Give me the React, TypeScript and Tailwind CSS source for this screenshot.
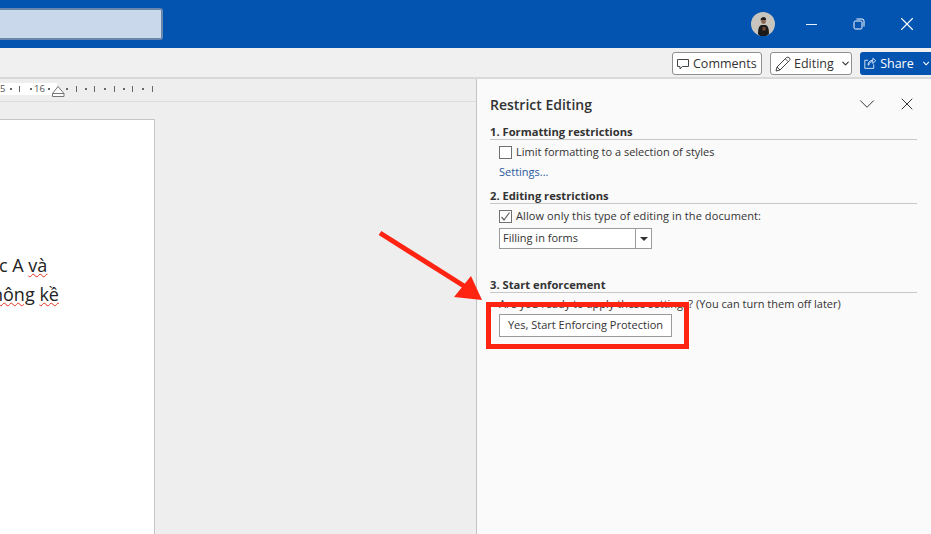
import React from 'react';
import { X, ChevronDown } from 'lucide-react';

const font = "font-['Open_Sans','Noto_Sans',sans-serif]";

const Ruler = () => (
  <div className="h-[23px] bg-[#eeeeee] border-b border-[#dcdcdc] flex items-start pt-[4px] shrink-0">
    <div className="w-[57px] h-[12px] bg-white flex items-center text-[9.5px] leading-none text-[#555555] overflow-hidden shrink-0">
      <span className="w-[6px]">5</span>
      <span className="ml-[4px] w-[2px] h-[2px] bg-[#666666]" />
      <span className="ml-[7px] w-px h-[6px] bg-[#666666]" />
      <span className="ml-[10px] w-[2px] h-[2px] bg-[#666666]" />
      <span className="ml-[2px]">16</span>
      <span className="ml-[3px] w-[2px] h-[2px] bg-[#666666]" />
    </div>
    <svg width="110" height="20" viewBox="0 0 110 20" className="-ml-[6px]">
      <path d="M1.5 10.5 L7 3.5 L13 10.5 V13.5 H1.5 Z M1.5 10.5 H13" fill="#ffffff" stroke="#777777" />
      {[15, 34, 53, 72, 91].map(x => (
        <rect key={x} x={x} y={5} width="2" height="2" fill="#666666" />
      ))}
      {[25, 43, 63, 81, 101].map(x => (
        <rect key={x} x={x} y={3} width="1" height="6" fill="#666666" />
      ))}
    </svg>
  </div>
);

const Section = ({ title, children }: { title: string; children?: React.ReactNode }) => (
  <div>
    <div className="h-[18px] pt-[2px] mr-[14px] border-b border-[#c8c8c8] text-[11.2px] leading-[15px] font-bold text-[#333333] whitespace-nowrap">
      {title}
    </div>
    {children}
  </div>
);

const Check = ({ checked, label }: { checked?: boolean; label: string }) => (
  <div className="flex items-center gap-[4px] ml-[9px] h-[14px] text-[11px] text-[#333333] whitespace-nowrap">
    <div className="w-[13px] h-[13px] border border-[#707070] bg-white flex items-center justify-center">
      {checked && (
        <svg width="11" height="11" viewBox="0 0 11 11">
          <path d="M1.5 6 L4 9 L9.5 1.5" fill="none" stroke="#606060" strokeWidth="1.2" />
        </svg>
      )}
    </div>
    <span className={checked ? 'tracking-[0.1px]' : ''}>{label}</span>
  </div>
);

export default function App() {
  return (
    <div className={`relative w-[931px] h-[534px] overflow-hidden flex flex-col bg-[#eeeeee] ${font}`}>
      {/* Title bar */}
      <div className="h-12 bg-[#0353b0] flex items-center shrink-0">
        <div className="w-[163px] h-[32px] bg-[#c9d8ea] border-2 border-l-0 border-[#6b86ad] rounded-r-[3px]" />
        <div className="ml-auto flex items-center">
          <svg width="24" height="24" viewBox="0 0 24 24" className="mr-[12px]">
            <circle cx="12" cy="12" r="12" fill="#c8c5bf" />
            <path d="M7 22 Q7 13.5 10.5 13 H14.5 Q18 13.5 18 22 L15 24 H9 Z" fill="#1b1a1a" />
            <circle cx="12.5" cy="9.5" r="2.4" fill="#8a6552" />
            <path d="M9.5 8.5 Q9.5 5 13 5 Q15.5 5.5 15 8 L10.5 8 Z" fill="#1e1a18" />
            <rect x="11.5" y="15" width="3" height="3.5" fill="#7a4a35" />
          </svg>
          <div className="w-[48px] flex justify-center">
            <div className="w-[11px] h-px bg-white/90" />
          </div>
          <div className="w-[48px] flex justify-center">
            <svg width="12" height="12" viewBox="0 0 12 12">
              <rect x="1" y="3" width="8" height="8" rx="1.5" fill="none" stroke="#ffffff" />
              <path d="M3.5 1 H9 Q11 1 11 3 V8.5" fill="none" stroke="#ffffff" />
            </svg>
          </div>
          <div className="w-[48px] flex justify-center">
            <X size={22} strokeWidth={1.2} className="text-white" />
          </div>
        </div>
      </div>

      {/* Ribbon strip */}
      <div className="h-[31px] pt-[2px] bg-[#f0f0f0] border-b-2 border-[#d9d9d9] flex items-center justify-end gap-[8px] shrink-0 text-[12.5px] text-[#333333]">
        <div className="w-[90px] h-[23px] bg-white border border-[#8f8f8f] rounded-[3px] flex items-center gap-[4px] pl-[4px] whitespace-nowrap">
          <svg width="12" height="12" viewBox="0 0 12 12">
            <path d="M0.5 1.5 H11.5 V8.5 H5.5 L3 11 V8.5 H0.5 Z" fill="none" stroke="#444444" />
          </svg>
          <span className="pt-[2px]">Comments</span>
        </div>
        <div className="w-[82px] h-[23px] bg-white border border-[#8f8f8f] rounded-[3px] flex items-center gap-[3px] pl-[4px] whitespace-nowrap">
          <svg width="16" height="16" viewBox="0 0 16 16">
            <path d="M1 15 L2 11 L11.5 1.5 Q13 0.5 14.5 2 Q15.5 3.5 14.5 4.5 L5 14 Z M2 11 L5 14 M10.5 3 L13 5.5" fill="none" stroke="#444444" />
          </svg>
          <span className="pt-[2px]">Editing</span>
          <ChevronDown size={11} strokeWidth={2.4} className="ml-[3px] text-[#333333]" />
        </div>
        <div className="w-[71px] h-[23px] bg-[#0353b0] rounded-l-[3px] flex items-center gap-[4px] pl-[4px] text-white whitespace-nowrap">
          <svg width="13" height="13" viewBox="0 0 15 14">
            <path d="M5 3 H1 V13 H12 V8 M6 9 Q6 5 11 4.5 V7 L14.5 3.5 L11 0.5 V3 Q5 3.5 5 9 Z" fill="none" stroke="#ffffff" />
          </svg>
          <span className="pt-[2px]">Share</span>
          <ChevronDown size={11} strokeWidth={2.4} className="ml-[3px]" />
        </div>
      </div>

      {/* Body */}
      <div className="flex-1 flex min-h-0">
        <div className="w-[476px] flex flex-col shrink-0">
          <Ruler />
          <div className="flex-1 pt-[17px]">
            <div className="w-[155px] h-full bg-white border-t border-r border-[#c6c6c6] pt-[131px] text-[18px] leading-[29px] text-[#222222] whitespace-nowrap overflow-hidden">
              <div className="-ml-[1px]">
                c A <span className="underline decoration-wavy decoration-[#e5321e] decoration-1">và</span>
              </div>
              <div className="-ml-[8px]">
                <span className="underline decoration-wavy decoration-[#e5321e] decoration-1">hông</span>{' '}
                <span className="underline decoration-wavy decoration-[#e5321e] decoration-1">kề</span>
              </div>
            </div>
          </div>
        </div>

        {/* Restrict Editing pane */}
        <div className="flex-1 bg-[#fafafa] border-l border-[#c4c4c4] pl-[13px]">
          <div className="flex items-center h-[43px] pt-[7px] text-[#333333]">
            <span className="text-[14px] font-semibold">Restrict Editing</span>
            <ChevronDown size={26} strokeWidth={0.9} className="ml-auto -mr-[1px]" />
            <X size={20} strokeWidth={1.2} className="ml-[18px] mr-[14px]" />
          </div>
          <Section title="1. Formatting restrictions">
            <div className="mt-[5px]">
              <Check label="Limit formatting to a selection of styles" />
            </div>
            <div className="ml-[9px] mt-[6px] text-[11px] leading-[14px] text-[#2b5b9e]">Settings...</div>
          </Section>
          <div className="mt-[7px]">
            <Section title="2. Editing restrictions">
              <div className="mt-[5px]">
                <Check checked label="Allow only this type of editing in the document:" />
              </div>
              <div className="ml-[9px] mt-[5px] w-[153px] h-[21px] bg-white border border-[#9a9a9a] flex items-center text-[11px] text-[#333333]">
                <span className="flex-1 pl-[3px]">Filling in forms</span>
                <div className="w-[16px] h-full border-l border-[#9a9a9a] flex items-center justify-center">
                  <div className="w-0 h-0 border-x-[4px] border-x-transparent border-t-[4px] border-t-[#333333]" />
                </div>
              </div>
            </Section>
          </div>
          <div className="mt-[26px]">
            <Section title="3. Start enforcement">
              <div className="ml-[9px] mt-[4px] text-[11px] leading-[14px] text-[#333333] whitespace-nowrap">
                Are you ready to apply these settings? (You can turn them off later)
              </div>
              <div className="ml-[9px] mt-[3px] w-[173px] h-[23px] bg-white border border-[#9a9a9a] flex items-center justify-center text-[11px] text-[#333333] whitespace-nowrap">
                Yes, Start Enforcing Protection
              </div>
            </Section>
          </div>
        </div>
      </div>

      {/* Annotation overlay */}
      <div className="absolute left-[486px] top-[302px] w-[203px] h-[47px] border-[5px] border-[#ff2412]" />
      <svg className="absolute left-0 top-0" width="931" height="534" viewBox="0 0 931 534">
        <path d="M380 233 L464 286" stroke="#ff2412" strokeWidth="5" fill="none" />
        <path d="M482 300 L454 297 L471 276 Z" fill="#ff2412" />
      </svg>
    </div>
  );
}
